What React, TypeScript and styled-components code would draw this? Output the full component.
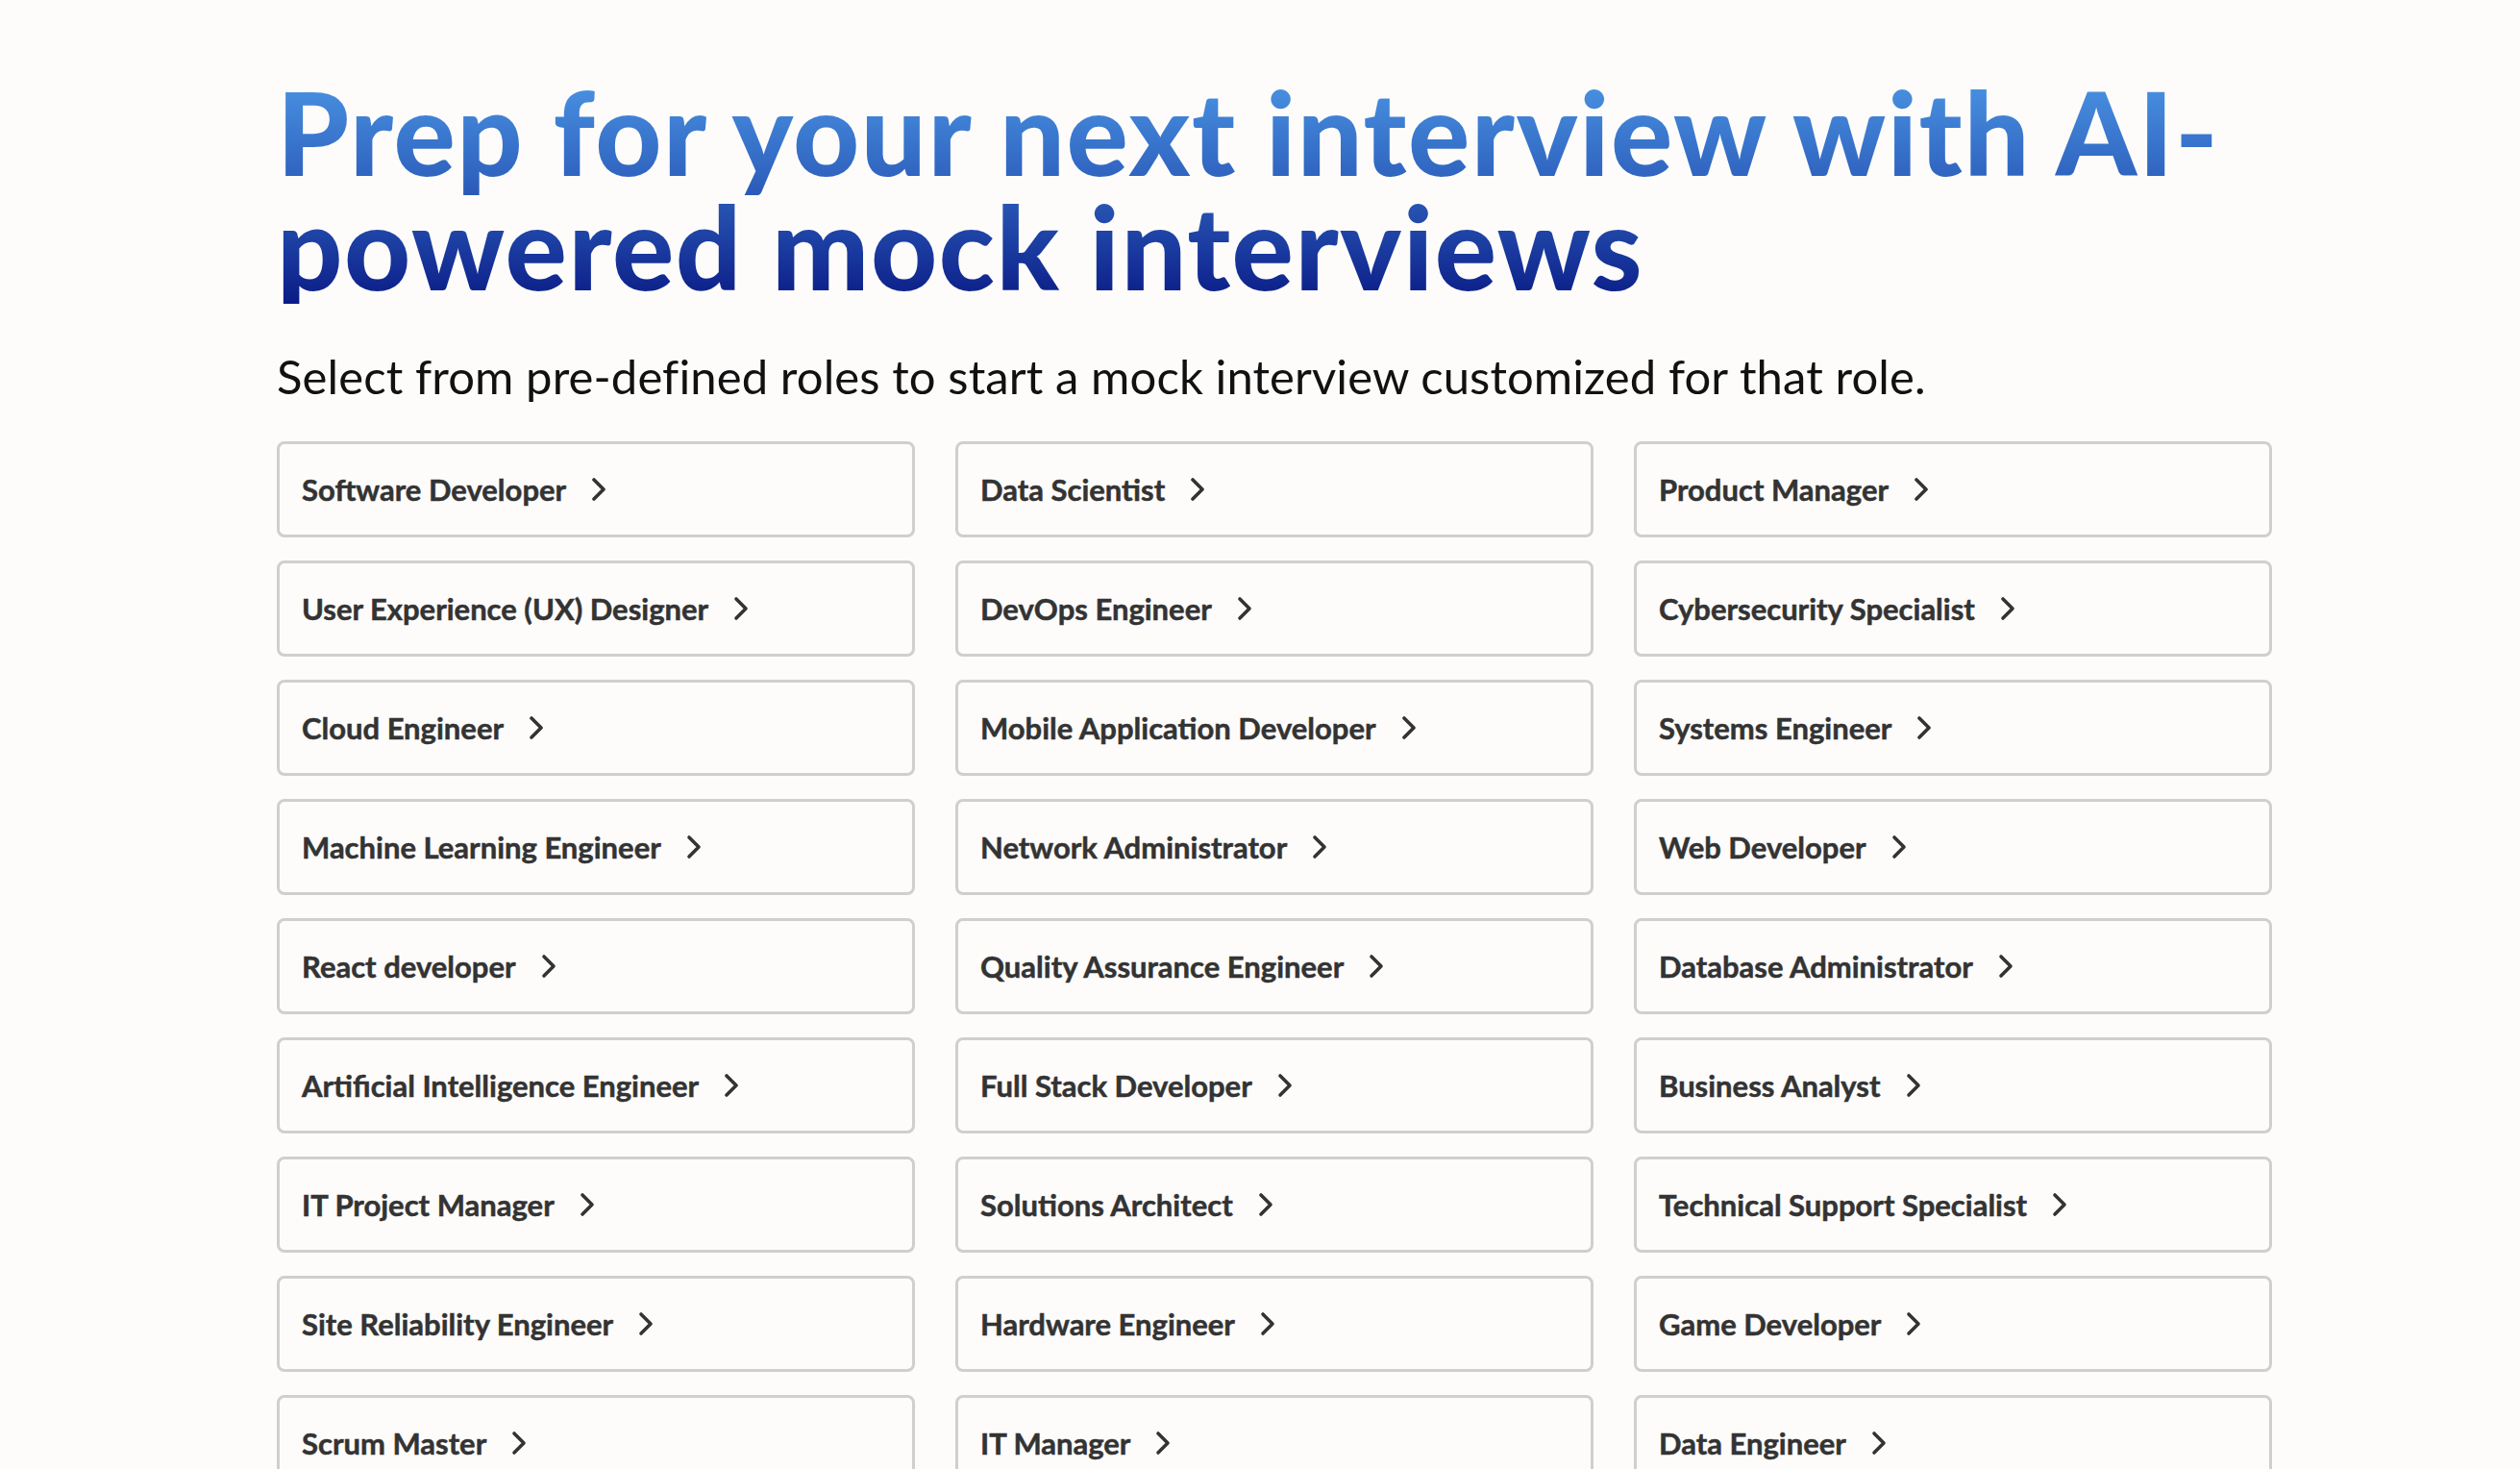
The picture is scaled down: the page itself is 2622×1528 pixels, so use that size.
import styled, { createGlobalStyle } from "styled-components";

const GlobalStyle = createGlobalStyle`
  html, body {
    margin: 0;
    padding: 0;
    background: #fdfcfa;
  }
  * {
    box-sizing: border-box;
  }
`;

const Page = styled.main`
  padding: 78px 0 0 288px;
  font-family: "Lato", "Noto Sans", sans-serif;
`;

const Heading = styled.h1`
  margin: 0;
  width: 2100px;
  font-size: 120px;
  line-height: 119px;
  font-weight: 900;
  letter-spacing: 1.6px;
  background: linear-gradient(180deg, #4b95e4 0%, #2f63bf 45%, #0a1b86 100%);
  -webkit-background-clip: text;
  background-clip: text;
  color: transparent;
`;

const Subtitle = styled.p`
  margin: 47px 0 40px;
  font-size: 49px;
  line-height: 56px;
  font-weight: 400;
  letter-spacing: 0.1px;
  color: #111111;
`;

const RoleGrid = styled.div`
  display: grid;
  grid-template-columns: repeat(3, 664px);
  column-gap: 42px;
  row-gap: 24px;
`;

const RoleCard = styled.button`
  display: flex;
  align-items: center;
  gap: 26px;
  height: 100px;
  padding: 0 23px;
  background: #fdfcfb;
  border: 3px solid #cfcfcf;
  border-radius: 8px;
  font-family: inherit;
  font-size: 31px;
  font-weight: 700;
  color: #333333;
  -webkit-text-stroke: 0.5px #333333;
  text-align: left;
  cursor: pointer;
`;

const Chevron = () => (
  <svg width="16" height="28" viewBox="0 0 16 28" fill="none">
    <polyline
      points="3,4 13,14 3,24"
      stroke="#333333"
      strokeWidth="3.6"
      strokeLinecap="round"
      strokeLinejoin="round"
    />
  </svg>
);

const roles = [
  "Software Developer",
  "Data Scientist",
  "Product Manager",
  "User Experience (UX) Designer",
  "DevOps Engineer",
  "Cybersecurity Specialist",
  "Cloud Engineer",
  "Mobile Application Developer",
  "Systems Engineer",
  "Machine Learning Engineer",
  "Network Administrator",
  "Web Developer",
  "React developer",
  "Quality Assurance Engineer",
  "Database Administrator",
  "Artificial Intelligence Engineer",
  "Full Stack Developer",
  "Business Analyst",
  "IT Project Manager",
  "Solutions Architect",
  "Technical Support Specialist",
  "Site Reliability Engineer",
  "Hardware Engineer",
  "Game Developer",
  "Scrum Master",
  "IT Manager",
  "Data Engineer",
];

export default function App() {
  return (
    <>
      <GlobalStyle />
      <Page>
        <Heading>Prep for your next interview with AI-powered mock interviews</Heading>
        <Subtitle>
          Select from pre-defined roles to start a mock interview customized for that role.
        </Subtitle>
        <RoleGrid>
          {roles.map((role) => (
            <RoleCard key={role}>
              {role}
              <Chevron />
            </RoleCard>
          ))}
        </RoleGrid>
      </Page>
    </>
  );
}
